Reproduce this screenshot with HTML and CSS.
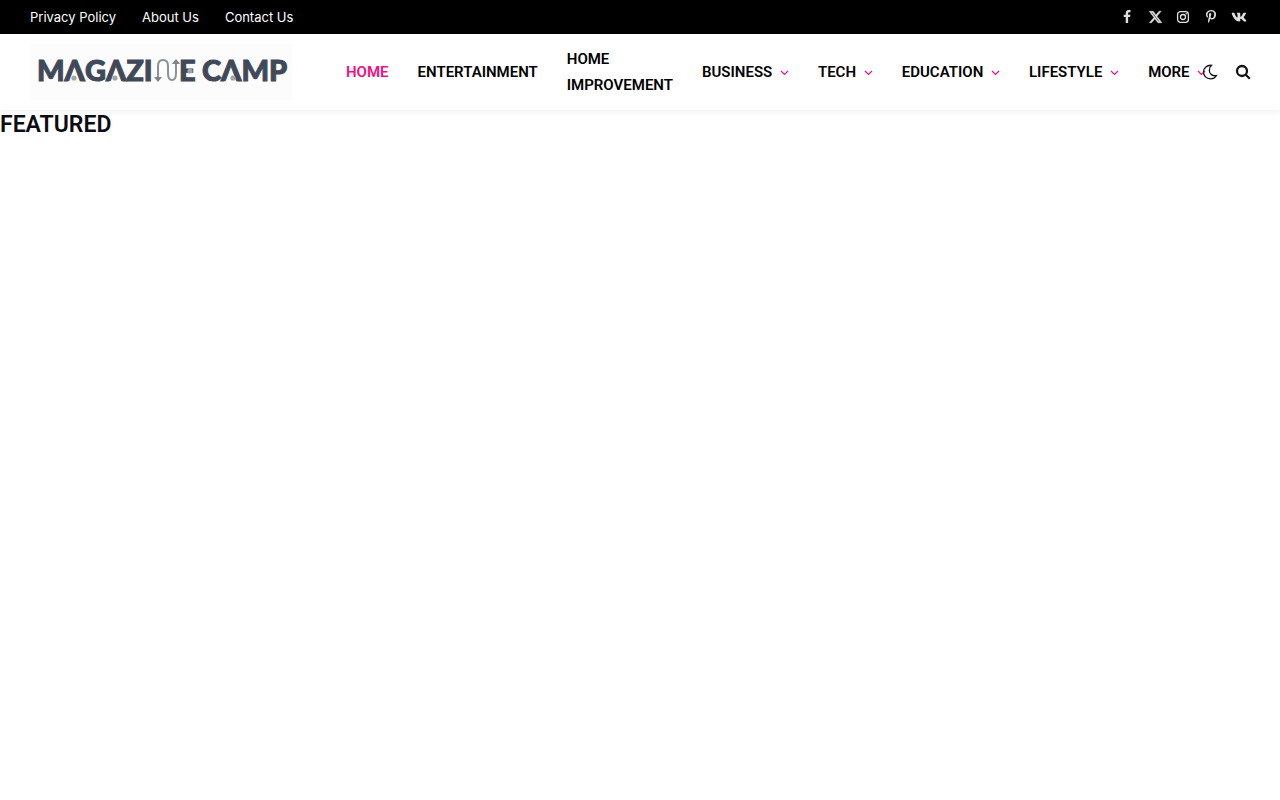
FILE: index.html
```html
<!DOCTYPE html>
<html lang="en">
<head>
    <meta charset="utf-8">
    <meta name="viewport" content="width=device-width, initial-scale=1">
    <title>Magazine Camp</title>
    <link rel="stylesheet" href="styles.css">
</head>
<body>
    <div class="top-bar">
        <nav class="top-links">
            <a href="#">Privacy Policy</a>
            <a href="#">About Us</a>
            <a href="#">Contact Us</a>
        </nav>
        <div class="social">
            <a href="#" aria-label="Facebook"><svg width="14" height="14" viewBox="0 0 1792 1792"><path d="M1343 12v264h-157q-86 0-116 36t-30 108v189h293l-39 296h-254v759H734V905H479V609h255V391q0-186 104-288.500T1115 0q147 0 228 12z"/></svg></a>
            <a href="#" aria-label="X"><svg class="x" width="15" height="14" viewBox="0 0 24 24"><path d="M18.244 2.250h3.308l-7.227 8.260 8.502 11.240H16.170l-5.214-6.817L4.990 21.750H1.680l7.730-8.835L1.254 2.250H8.080l4.713 6.231zm-1.161 17.520h1.833L7.084 4.126H5.117z"/></svg></a>
            <a href="#" aria-label="Instagram"><svg width="14" height="14" viewBox="0 0 14 14"><rect class="line" x="1.600" y="1.600" width="10.800" height="10.800" rx="2.800"/><circle class="line" cx="7" cy="7" r="2.500"/><circle cx="10.200" cy="3.800" r="0.800"/></svg></a>
            <a href="#" aria-label="Pinterest"><svg width="14" height="14" viewBox="0 0 1792 1792"><path d="M256 597q0-108 37.500-203.500T397 227t152-123 185-78T936 0q158 0 294 66.500T1451 260t85 287q0 96-19 188t-60 177-100 149.500-145 103-189 38.500q-68 0-135-32t-96-88q-10 39-28 112.500t-23.500 95-20.500 71-26 71-32 62.500-46 77.500-62 86.500l-14 5-9-10q-15-157-15-188 0-92 21.500-206.500T604 972t52-203q-32-65-32-169 0-83 52-156t132-73q61 0 95 40.500T937 514q0 66-44 191t-44 187q0 63 45 104.500t109 41.500q55 0 102-25t78.500-68 56-95 38-110.500 20-111 6.500-99.500q0-173-109.500-269.500T909 163q-200 0-334 129.500T441 621q0 44 12.500 85t27 65 27 45.500T520 847q0 28-15 73t-37 45q-2 0-17-3-51-15-90.500-56t-61-94.500-32.500-108T256 597z"/></svg></a>
            <a href="#" aria-label="VKontakte"><svg width="16" height="14" viewBox="0 0 576 512"><path d="M545 117.700c3.700-12.500 0-21.700-17.800-21.700h-58.900c-15 0-21.900 7.900-25.600 16.700 0 0-30 73.100-72.400 120.500-13.700 13.700-20 18.100-27.500 18.100-3.700 0-9.400-4.400-9.400-16.900V117.700c0-15-4.200-21.700-16.600-21.700h-92.600c-9.400 0-15 7-15 13.500 0 14.200 21.200 17.500 23.400 57.500v86.800c0 19-3.400 22.500-10.900 22.500-20 0-68.600-73.400-97.400-157.400-5.800-16.300-11.500-22.900-26.600-22.900H38.800c-16.800 0-20.200 7.900-20.200 16.700 0 15.600 20 93.100 93.100 195.500C160.400 378.100 229 416 291.400 416c37.500 0 42.100-8.400 42.100-22.900 0-66.800-3.400-73.100 15.400-73.100 8.700 0 23.700 4.400 58.700 38.100 40 40 46.600 57.900 69 57.900h58.900c16.800 0 25.300-8.400 20.400-25-11.200-34.900-86.900-106.700-90.300-111.500-8.700-11.200-6.200-16.200 0-26.200.1-.1 72-101.300 79.400-135.600z"/></svg></a>
        </div>
    </div>

    <header class="header">
        <a class="logo" href="#" aria-label="Magazine Camp">
            <svg width="262" height="56" viewBox="0 0 262 56">
                <text x="7" y="37">MΛGΛZI</text>
                <!-- the N is a looping arrow -->
                <path class="loop" d="M128 35V22q0-6 5-6t5 6v7q0 7 4 7t4-7V18"/>
                <path class="tip" d="M124 33h8l-4 5zM142 20h8l-4-5z"/>
                <text x="149" y="37">E</text>
                <text x="172" y="37">CΛMP</text>
                <circle class="dot" cx="44" cy="34" r="2.600"/>
                <circle class="dot" cx="85" cy="34" r="2.600"/>
                <circle class="dot" cx="160" cy="27" r="2.600"/>
                <circle class="dot" cx="203" cy="34" r="2.600"/>
            </svg>
        </a>
        <nav class="menu">
            <a class="active" href="#">HOME</a>
            <a href="#">ENTERTAINMENT</a>
            <a href="#">HOME<br>IMPROVEMENT</a>
            <a href="#">BUSINESS <svg class="arrow" width="9" height="6" viewBox="0 0 9 6"><path d="M1 1l3.500 3.500L8 1"/></svg></a>
            <a href="#">TECH <svg class="arrow" width="9" height="6" viewBox="0 0 9 6"><path d="M1 1l3.500 3.500L8 1"/></svg></a>
            <a href="#">EDUCATION <svg class="arrow" width="9" height="6" viewBox="0 0 9 6"><path d="M1 1l3.500 3.500L8 1"/></svg></a>
            <a href="#">LIFESTYLE <svg class="arrow" width="9" height="6" viewBox="0 0 9 6"><path d="M1 1l3.500 3.500L8 1"/></svg></a>
            <a href="#">MORE <svg class="arrow" width="9" height="6" viewBox="0 0 9 6"><path d="M1 1l3.500 3.500L8 1"/></svg></a>
        </nav>
        <div class="actions">
            <button type="button" aria-label="Dark mode"><svg width="16" height="16" viewBox="0 0 16 16"><path class="stroke" d="M9.500 1.300C5 .8 1.500 4 1.500 8s3 6.800 6.900 6.800c2.600 0 4.700-1.100 5.900-3.200C10.500 12.200 7.500 10 7.300 6.800 7.200 4.500 8 2.500 9.500 1.300z"/></svg></button>
            <button type="button" aria-label="Search"><svg width="16" height="16" viewBox="0 0 16 16"><circle class="stroke bold" cx="7" cy="7" r="5"/><path class="stroke bold" d="M10.800 10.800l4 4"/></svg></button>
        </div>
    </header>

    <main>
        <h2 class="section-title">FEATURED</h2>
    </main>
</body>
</html>
```
FILE: styles.css
```css
body {
    margin: 0;
    background-color: #fff;
    font-family: Inter, sans-serif;
}

a {
    color: inherit;
    text-decoration: none;
}

.top-bar {
    display: flex;
    justify-content: space-between;
    align-items: center;
    height: 34px;
    padding: 0 27px 0 30px;
    background-color: #000;
    color: #fff;
}

.top-links {
    display: flex;
    gap: 26px;
    font-size: 13px;
    font-weight: 400;
}

.social {
    display: flex;
}

.social a {
    display: flex;
    justify-content: center;
    align-items: center;
    width: 28px;
}

.social svg {
    fill: #e0e0e0;
}

.social .x {
    stroke: #e0e0e0;
    stroke-width: 1;
}

.social .line {
    fill: none;
    stroke: #e0e0e0;
    stroke-width: 1.3;
}

.header {
    display: flex;
    align-items: center;
    height: 76px;
    padding: 0 29px 0 30px;
    box-shadow: 0 2px 7px rgba(0, 0, 0, 0.06);
}

.logo {
    flex: none;
    background-color: #fcfcfc;
}

.logo svg {
    display: block;
}

.logo text {
    font-family: Lato, sans-serif;
    font-size: 29px;
    font-weight: 900;
    fill: #414959;
    stroke: #414959;
    stroke-width: 1;
}

.logo .loop {
    fill: none;
    stroke: #8a9298;
    stroke-width: 2;
}

.logo .tip {
    fill: #7d858c;
}

.logo .dot {
    fill: #a0a6a9;
}

.menu {
    display: flex;
    align-items: center;
    flex: 1;
    gap: 29px;
    min-width: 0;
    margin-left: 54px;
    font-family: Roboto, sans-serif;
    font-size: 15px;
    font-weight: 600;
    line-height: 26px;
    white-space: nowrap;
    color: #000;
}

.menu .active {
    color: #f70d7f;
}

.arrow {
    margin-left: 4px;
    vertical-align: 1px;
    fill: none;
    stroke: #f70d7f;
    stroke-width: 1.2;
}

.actions {
    display: flex;
    gap: 17px;
}

.actions button {
    display: flex;
    padding: 0;
    border: none;
    background: none;
    cursor: pointer;
}

.stroke {
    fill: none;
    stroke: #111;
    stroke-width: 1.3;
}

.bold {
    stroke-width: 2.3;
}

.section-title {
    margin: 0;
    font-family: Roboto, sans-serif;
    font-size: 23px;
    font-weight: 600;
    line-height: 29px;
    color: #0c0c14;
}
```
